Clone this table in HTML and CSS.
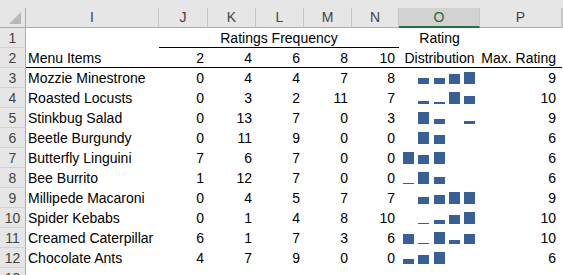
FILE: index.html
```html
<!DOCTYPE html>
<html>
<head>
<meta charset="utf-8">
<link rel="stylesheet" href="styles.css">
</head>
<body>
<div class="strip"></div>
<div class="sheet">
  <div class="corner"><span class="tri"></span></div>
  <div class="ch">I</div>
  <div class="ch">J</div>
  <div class="ch">K</div>
  <div class="ch">L</div>
  <div class="ch">M</div>
  <div class="ch">N</div>
  <div class="ch sel">O</div>
  <div class="ch">P</div>
  <div class="ch"></div>

  <div class="rh">1</div>
  <div class="c"></div>
  <div class="c span5 ctr bb">Ratings Frequency</div>
  <div class="c ctr">Rating</div>
  <div class="c"></div>
  <div class="c"></div>

  <div class="rh">2</div>
  <div class="c txt bb">Menu Items</div>
  <div class="c num bb">2</div>
  <div class="c num bb">4</div>
  <div class="c num bb">6</div>
  <div class="c num bb">8</div>
  <div class="c num bb">10</div>
  <div class="c ctr bb">Distribution</div>
  <div class="c num max bb">Max. Rating</div>
  <div class="c"></div>

  <div class="rh">3</div>
  <div class="c txt">Mozzie Minestrone</div>
  <div class="c num">0</div><div class="c num">4</div><div class="c num">4</div><div class="c num">7</div><div class="c num">8</div>
  <div class="c spark"><i style="height:0px"></i><i style="height:6px"></i><i style="height:6px"></i><i style="height:10px"></i><i style="height:12px"></i></div>
  <div class="c num max">9</div>
  <div class="c"></div>

  <div class="rh">4</div>
  <div class="c txt">Roasted Locusts</div>
  <div class="c num">0</div><div class="c num">3</div><div class="c num">2</div><div class="c num">11</div><div class="c num">7</div>
  <div class="c spark"><i style="height:0px"></i><i style="height:3px"></i><i style="height:2px"></i><i style="height:12px"></i><i style="height:8px"></i></div>
  <div class="c num max">10</div>
  <div class="c"></div>

  <div class="rh">5</div>
  <div class="c txt">Stinkbug Salad</div>
  <div class="c num">0</div><div class="c num">13</div><div class="c num">7</div><div class="c num">0</div><div class="c num">3</div>
  <div class="c spark"><i style="height:0px"></i><i style="height:12px"></i><i style="height:5px"></i><i style="height:0px"></i><i style="height:3px"></i></div>
  <div class="c num max">9</div>
  <div class="c"></div>

  <div class="rh">6</div>
  <div class="c txt">Beetle Burgundy</div>
  <div class="c num">0</div><div class="c num">11</div><div class="c num">9</div><div class="c num">0</div><div class="c num">0</div>
  <div class="c spark"><i style="height:0px"></i><i style="height:12px"></i><i style="height:9px"></i><i style="height:0px"></i><i style="height:0px"></i></div>
  <div class="c num max">6</div>
  <div class="c"></div>

  <div class="rh">7</div>
  <div class="c txt">Butterfly Linguini</div>
  <div class="c num">7</div><div class="c num">6</div><div class="c num">7</div><div class="c num">0</div><div class="c num">0</div>
  <div class="c spark"><i style="height:12px"></i><i style="height:9px"></i><i style="height:12px"></i><i style="height:0px"></i><i style="height:0px"></i></div>
  <div class="c num max">6</div>
  <div class="c"></div>

  <div class="rh">8</div>
  <div class="c txt">Bee Burrito</div>
  <div class="c num">1</div><div class="c num">12</div><div class="c num">7</div><div class="c num">0</div><div class="c num">0</div>
  <div class="c spark"><i style="height:1px"></i><i style="height:12px"></i><i style="height:7px"></i><i style="height:0px"></i><i style="height:0px"></i></div>
  <div class="c num max">6</div>
  <div class="c"></div>

  <div class="rh">9</div>
  <div class="c txt">Millipede Macaroni</div>
  <div class="c num">0</div><div class="c num">4</div><div class="c num">5</div><div class="c num">7</div><div class="c num">7</div>
  <div class="c spark"><i style="height:0px"></i><i style="height:7px"></i><i style="height:9px"></i><i style="height:12px"></i><i style="height:12px"></i></div>
  <div class="c num max">9</div>
  <div class="c"></div>

  <div class="rh">10</div>
  <div class="c txt">Spider Kebabs</div>
  <div class="c num">0</div><div class="c num">1</div><div class="c num">4</div><div class="c num">8</div><div class="c num">10</div>
  <div class="c spark"><i style="height:0px"></i><i style="height:1px"></i><i style="height:4px"></i><i style="height:9px"></i><i style="height:12px"></i></div>
  <div class="c num max">10</div>
  <div class="c"></div>

  <div class="rh">11</div>
  <div class="c txt">Creamed Caterpillar</div>
  <div class="c num">6</div><div class="c num">1</div><div class="c num">7</div><div class="c num">3</div><div class="c num">6</div>
  <div class="c spark"><i style="height:10px"></i><i style="height:1px"></i><i style="height:12px"></i><i style="height:4px"></i><i style="height:10px"></i></div>
  <div class="c num max">10</div>
  <div class="c"></div>

  <div class="rh">12</div>
  <div class="c txt">Chocolate Ants</div>
  <div class="c num">4</div><div class="c num">7</div><div class="c num">9</div><div class="c num">0</div><div class="c num">0</div>
  <div class="c spark"><i style="height:5px"></i><i style="height:9px"></i><i style="height:12px"></i><i style="height:0px"></i><i style="height:0px"></i></div>
  <div class="c num max">6</div>
  <div class="c"></div>

  <div class="rh">13</div>
  <div class="c"></div><div class="c"></div><div class="c"></div><div class="c"></div><div class="c"></div>
  <div class="c"></div><div class="c"></div><div class="c"></div><div class="c"></div>
</div>
</body>
</html>
```

FILE: styles.css
```css
* { box-sizing: border-box; }

html, body {
  margin: 0;
  padding: 0;
  background: #ffffff;
}

body {
  width: 563px;
  height: 275px;
  overflow: hidden;
  font-family: "Liberation Sans", Arial, sans-serif;
  font-size: 14px;
  color: #000;
}

.strip {
  height: 8px;
  background: #e6e6e6;
}

.sheet {
  display: grid;
  grid-template-columns: 26px 133px 49px 48px 48px 48px 47px 81px 82px 1fr;
  grid-template-rows: 20px repeat(13, 20px);
}

.corner {
  position: relative;
  background: #e6e6e6;
  border-right: 1px solid #ababab;
  border-bottom: 1px solid #ababab;
}

.tri {
  position: absolute;
  right: 4px;
  bottom: 3px;
  width: 12px;
  height: 12px;
  background: #b8b8b8;
  clip-path: polygon(100% 0, 100% 100%, 0 100%);
}

.ch {
  background: #e6e6e6;
  border-right: 1px solid #c6c6c6;
  border-bottom: 1px solid #ababab;
  text-align: center;
  line-height: 19px;
  color: #444;
}

.ch.sel {
  background: #d2d2d2;
  border-bottom: 2px solid #217346;
  color: #1f6b42;
}

.rh {
  background: #e6e6e6;
  border-right: 1px solid #ababab;
  border-bottom: 1px solid #d0d0d0;
  text-align: center;
  line-height: 20px;
  color: #444;
}

.c {
  height: 20px;
  line-height: 20px;
  white-space: nowrap;
  overflow: visible;
}

.txt { padding-left: 2px; }

.num {
  text-align: right;
  padding-right: 4px;
}

.num.max { padding-right: 6px; }

.ctr { text-align: center; }

.span5 { grid-column: span 5; }

.bb { border-bottom: 1px solid #000; }

.spark {
  display: flex;
  align-items: flex-end;
  gap: 4.25px;
  padding: 0 0 4px 4px;
}

.spark i {
  display: block;
  width: 11px;
  background: #385f96;
}
```
